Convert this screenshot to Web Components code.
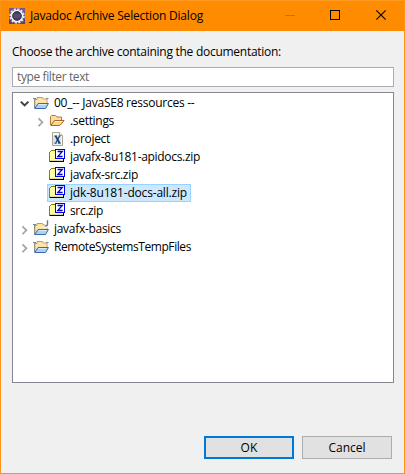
<!DOCTYPE html>
<html lang="en">
<head>
<meta charset="utf-8">
<title>Javadoc Archive Selection Dialog</title>
<style>html,body{margin:0;height:100%;overflow:hidden}</style>
</head>
<body>
<archive-dialog></archive-dialog>
<script>
const define = (name, html, setup) => {
  const t = document.createElement('template');
  t.innerHTML = html;
  customElements.define(name, class extends HTMLElement {
    connectedCallback() {
      if (!this.shadowRoot) {
        this.attachShadow({mode: 'open'}).append(t.content.cloneNode(true));
      }
      if (setup) setup(this, this.shadowRoot);
    }
  });
};

// Label whose letter spacing is tuned so that its text fills the given width.
define('fit-label', `<style>
:host{display:inline-block;white-space:pre;line-height:18px;height:18px;flex:none}
</style><span><slot></slot></span>`, (el, root) => {
  const w = +el.getAttribute('w');
  el.style.width = w + 'px';
  const span = root.querySelector('span');
  const n = el.textContent.length;
  span.style.letterSpacing = (w - span.getBoundingClientRect().width) / n + 'px';
});

const project = `
<path d="M0 3.5h3M13 3.5h2.5" stroke="#6f86a8"/><path d="M1.5 4v9.5" stroke="#6f86a8"/>
<path d="M2 13V4.5h2v-2h5.5l1 1.5h3.5v4.5" fill="#f8dc94" stroke="#c49a55"/>
<path d="M4.7 3.2h4.2l1 1.6h3.5v3H5.2L2.6 12V5.2h2z" fill="#fbe7ae"/>
<path d="M1.8 13.5L5 8.5h10.4l-2.8 5z" fill="#a9d0f5" stroke="#3f68ad"/>
<path d="M5.6 9.5h7.8" stroke="#dcecfc"/>`;
const glyphs = {
  project,
  java: project +
    '<path d="M14.5-.5v4q0 2-3 2" fill="none" stroke="#fff" stroke-width="3.2"/><path d="M14.5-.8v4q0 2-2.7 1.8" fill="none" stroke="#4b83ad" stroke-width="1.4"/>',
  folder: `<path d="M1.5 12V3.5l1-1h4l1.4 1.5h4.6v3" fill="#f9dfa6" stroke="#b57b35"/>
<path d="M1.8 12.5L5.3 7.5h9.8l-3.4 4.2-1.7.8z" fill="#f8d68c" stroke="#a86b27"/>
<path d="M5.8 8.5h7.4" stroke="#fdefc8"/>`,
  file: `<path d="M3.5 1.5h7l3 3v10h-10z" fill="#f5f8fc" stroke="#a8a590"/>
<path d="M10.5 1.5v3h3" fill="#efe0ac" stroke="#c9a95a"/><path d="M4 5h8v8.5H4z" fill="#d5e4f6"/>
<path d="M6.6 4.9l4 7.3" stroke="#213e6b" stroke-width="1.9"/><path d="M10.6 4.9l-4 7.3" stroke="#213e6b" stroke-width="1.1"/><path d="M5.3 4.9h2.6M9.4 4.9h2.2M5.3 12.2h2.3M9.1 12.2h2.6" stroke="#213e6b" stroke-width=".8"/>`,
  zip: `<g shape-rendering="crispEdges"><path d="M0 3h1V2h1V1h4v2h8v10H0z" fill="#848200"/>
<path d="M1 3h13v9H1z" fill="#ffffa8"/><path d="M2 2h4v1H2z" fill="#ffffce"/>
<path d="M1 13h14V9h-1v3H1z" fill="#000"/><path d="M1 11h13v1H1z" fill="#dddd88"/>
<path d="M6 0h10v10H6z" fill="#0000e8"/><path d="M7 1h8v8H7z" fill="#fff"/></g>
<path d="M8.6 2.5h4.7L8.8 7.5h4.8" fill="none" stroke="#0000d8" stroke-width="1.3"/>`
};
define('node-icon', `<style>:host{display:block;width:16px;height:16px;flex:none}svg{display:block;overflow:visible}</style>
<svg width="16" height="16" viewBox="0 0 16 16" fill="none"></svg>`, (el, root) => {
  root.querySelector('svg').innerHTML = glyphs[el.getAttribute('kind')];
});

define('tree-row', `<style>
:host{display:flex;height:18px;align-items:center;padding-left:8px}
:host([level="1"]){padding-left:24px}
.arrow{width:10px;height:10px;flex:none;fill:none;stroke:#a6a6a6;stroke-width:1.8;overflow:visible}
.item{display:flex;align-items:center;height:18px;box-sizing:border-box;border:1px solid transparent;padding:0 3px 0 1px}
node-icon{margin-right:5px}
:host([selected]) .item{background:#cce8ff;border-color:#99d1ff}
</style><svg class="arrow" viewBox="0 0 10 10"></svg><div class="item"><slot></slot></div>`,
(el, root) => {
  const icon = document.createElement('node-icon');
  icon.setAttribute('kind', el.getAttribute('kind'));
  root.querySelector('.item').prepend(icon);
  const s = el.getAttribute('state'), a = root.querySelector('.arrow');
  if (s === 'open') a.innerHTML = '<path d="M-.2 3.6L3.6 7.4 7.4 3.6" stroke="#404040" stroke-width="2"/>';
  if (s === 'closed') a.innerHTML = '<path d="M1.5 2.4L5.4 6.3 1.5 10.2"/>';
});

define('push-button', `<style>
:host{display:flex;width:90px;height:23px;box-sizing:border-box;background:#e1e1e1;border:1px solid #adadad;align-items:center;justify-content:center}
:host([primary]){border:2px solid #0078d7}
</style><slot></slot>`);

define('title-bar', `<style>
:host{display:flex;height:31px;box-sizing:border-box;background:#ff8c00;border-top:1px solid #ff9a20;align-items:center;padding-left:8px}
.logo{margin-right:5px;flex:none}
.ctl{margin-left:auto;flex:none}
</style>
<svg class="logo" width="16" height="16" viewBox="0 0 16 16"><rect width="16" height="16" fill="#77598a"/><path d="M0 8h16v8H0z" fill="#54447a"/>
<circle cx="8" cy="8" r="6.8" fill="none" stroke="#e5e3e1" stroke-width="1.9" stroke-dasharray="2.2 1.36"/>
<circle cx="8" cy="8" r="5.5" fill="#443d68" stroke="#f2f0ed" stroke-width="1.7"/><circle cx="8" cy="8" r="4.3" fill="none" stroke="#32304d" stroke-width=".8"/><path d="M4.5 7h7M4.7 9h6.6" stroke="#6b668f" stroke-width=".8"/></svg>
<slot></slot>
<svg class="ctl" width="120" height="30" viewBox="284 1 120 30" fill="none"><path d="M285 15.5h10" stroke="#cc7000"/><rect x="330.5" y="10.5" width="9" height="9" stroke="#000"/><path d="M376.3 10.3l9.4 9.4M385.7 10.3l-9.4 9.4" stroke="#000" stroke-width="1.1"/></svg>`);

define('archive-dialog', `<style>
:host{display:flex;flex-direction:column;width:405px;height:474px;box-sizing:border-box;background:#f0f0f0;border:1px solid #ff9317;border-top:0;font:12px "Open Sans","Noto Sans",sans-serif;color:#000}
main{display:flex;flex-direction:column;padding:12px 10px 0 11px;flex:1}
.filter{display:flex;align-items:center;height:20px;box-sizing:border-box;border:1px solid #abadb3;background:#fff;padding-left:4px;margin-top:6px;color:#666}
.tree{height:291px;box-sizing:border-box;border:1px solid #828790;background:#fff;padding-top:1px;margin-top:5px}
footer{display:flex;justify-content:flex-end;gap:8px;margin-top:53px;padding-right:2px}
</style>
<title-bar><fit-label w="173">Javadoc Archive Selection Dialog</fit-label></title-bar>
<main>
<fit-label w="269">Choose the archive containing the documentation:</fit-label>
<div class="filter"><fit-label w="72">type filter text</fit-label></div>
<div class="tree">
<tree-row kind="project" state="open"><fit-label w="140.5">00_-- JavaSE8 ressources --</fit-label></tree-row>
<tree-row level="1" kind="folder" state="closed"><fit-label w="44">.settings</fit-label></tree-row>
<tree-row level="1" kind="file"><fit-label w="40">.project</fit-label></tree-row>
<tree-row level="1" kind="zip"><fit-label w="130">javafx-8u181-apidocs.zip</fit-label></tree-row>
<tree-row level="1" kind="zip"><fit-label w="68">javafx-src.zip</fit-label></tree-row>
<tree-row level="1" kind="zip" selected><fit-label w="117">jdk-8u181-docs-all.zip</fit-label></tree-row>
<tree-row level="1" kind="zip"><fit-label w="33">src.zip</fit-label></tree-row>
<tree-row kind="java" state="closed"><fit-label w="67">javafx-basics</fit-label></tree-row>
<tree-row kind="project" state="closed"><fit-label w="137">RemoteSystemsTempFiles</fit-label></tree-row>
</div>
<footer><push-button primary><fit-label w="17">OK</fit-label></push-button><push-button><fit-label w="37">Cancel</fit-label></push-button></footer>
</main>`);
</script>
</body>
</html>
